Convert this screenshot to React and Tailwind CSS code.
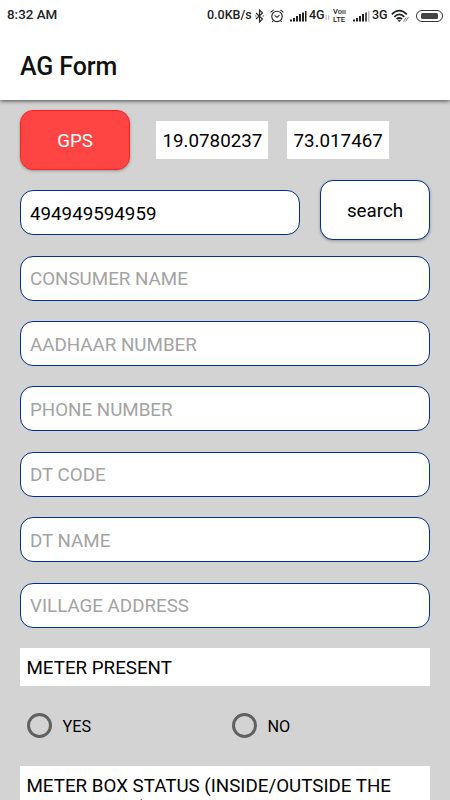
import React from "react"

const fields = [
	"CONSUMER NAME",
	"AADHAAR NUMBER",
	"PHONE NUMBER",
	"DT CODE",
	"DT NAME",
	"VILLAGE ADDRESS",
]

function Signal({ weak }) {
	return (
		<svg className="w-[17px] h-3 shrink-0" viewBox="0 0 17 12" fill="#222">
			<rect x="0" y="9.5" width="2" height="2" />
			<rect x="3" y="8" width="2" height="3.5" />
			<rect x="6" y="6" width="2" height="5.5" />
			<rect x="9" y="4" width="2" height="7.5" />
			<rect x="12" y="2.5" width="2" height="9" fill={weak ? "#555" : "#222"} />
			<rect x="15" y="1" width="1.5" height="10.5" fill={weak ? "#bbb" : "#222"} />
		</svg>
	)
}

function StatusBar() {
	return (
		<div className="flex h-[31px] items-center pl-[7px] pr-[7px] text-[12.5px] font-medium text-[#222]">
			<span className="w-[200px] text-[13.4px]">8:32 AM</span>
			<span className="w-[46px] whitespace-nowrap">0.0KB/s</span>
			{/* Bluetooth */}
			<svg className="ml-[2px] w-[9px] h-3.5 shrink-0" viewBox="0 0 9 14" fill="none" stroke="#222" strokeWidth="1.1">
				<path d="M1 4 L7.5 10 L4.5 13 V1 L7.5 4 L1 10" />
				<path d="M0.2 7h1.2M7.6 7h1.2" />
			</svg>
			{/* Alarm */}
			<svg className="ml-[6px] w-3.5 h-3.5 shrink-0" viewBox="0 0 14 14" fill="none" stroke="#222" strokeWidth="1.1">
				<circle cx="7" cy="7.4" r="5.2" />
				<path d="M0.6 3.4 L3.6 0.9 M13.4 3.4 L10.4 0.9 M4.6 6.3 L7 8.3 L9.5 6.2 M3.2 11.8l-1 1.2M10.8 11.8l1 1.2" />
			</svg>
			<span className="ml-[6px] flex"><Signal /></span>
			<span className="ml-[2px] w-[15px]">4G</span>
			<svg className="ml-px mt-1 w-[5px] h-[5px] shrink-0" viewBox="0 0 5 5" stroke="#aaa" strokeWidth="0.8" fill="none">
				<path d="M1.2 0v4.5l-1-1M3.6 5V.5l1 1" />
			</svg>
			<span className="ml-[3px] flex w-[14px] flex-col text-[7.5px] font-medium leading-[8px]">
				<span className="whitespace-nowrap">Voıı</span>
				<span>LTE</span>
			</span>
			<span className="ml-[6px] flex"><Signal weak /></span>
			<span className="ml-[2px] w-[15px]">3G</span>
			{/* Wifi */}
			<svg className="ml-[4px] w-[19px] h-3.5 shrink-0" viewBox="0 0 19 14" fill="none" stroke="#222" strokeWidth="1.7">
				<path d="M0.8 5.3 Q8.3 -2 15.8 5.3M3.3 7.8 Q8.3 3 13.3 7.8M5.6 10.2 Q8.3 7.8 11 10.2" />
				<path d="M6.9 11.2h2.8l-1.4 1.8z" fill="#222" strokeWidth="0.4" />
				<path d="M12.5 12.5 L15 8.5M14.5 12.5 L17.4 8.3" stroke="#777" strokeWidth="1" />
			</svg>
			{/* Battery */}
			<span className="ml-[6px] flex h-[12px] w-[27px] shrink-0 rounded-full border border-[#333] p-[2px]">
				<span className="mx-[2px] flex-1 rounded-[1.5px] bg-[#444]"></span>
			</span>
		</div>
	)
}

function Radio({ label }) {
	return (
		<label className="flex w-[205px] shrink-0 items-center">
			<span className="h-[25px] w-[25px] rounded-full border-3 border-[#606060]"></span>
			<span className="ml-[10.5px] pt-[2px] text-[16.25px] text-black">{label}</span>
		</label>
	)
}

function App() {
	return (
		<div
			className="flex h-[800px] w-[450px] flex-col overflow-hidden bg-[#d3d3d3]
				font-['Roboto',sans-serif] text-[18.75px] text-black"
		>
			{/* Header */}
			<header className="relative h-[100px] shrink-0 bg-white shadow-[0_1px_4px_rgba(0,0,0,0.65)]">
				<StatusBar />
				<h1 className="ml-5 flex h-[71px] items-center text-[25px] font-medium tracking-[-0.1px] text-[#111]">AG Form</h1>
			</header>

			<main className="flex flex-col px-5 pt-[10px]">
				{/* Location */}
				<div className="flex items-center">
					<button
						className="h-[60px] w-[110px] rounded-[13px] border border-[#ff2222] bg-[#ff4444] pt-[2px]
							text-white shadow-[0_1px_3px_rgba(0,0,0,0.3)]"
					>
						GPS
					</button>
					<span className="ml-[26px] flex h-[38px] w-[112px] items-center bg-white pl-[6.5px] pt-[2px]">19.0780237</span>
					<span className="ml-[19px] flex h-[38px] w-[102px] items-center bg-white pl-[6.5px] pt-[2px]">73.017467</span>
				</div>

				{/* Search */}
				<div className="mt-[10px] flex">
					<input
						defaultValue="494949594959"
						className="mt-[10px] h-[45px] w-[280px] rounded-[13px] border border-[#003087] bg-white px-[9px] pt-[2px]"
					/>
					<button
						className="ml-5 h-[60px] w-[110px] rounded-[13px] border border-[#003087] bg-white pt-[2px]
							shadow-[0_1px_3px_rgba(0,0,0,0.3)]"
					>
						search
					</button>
				</div>

				{/* Consumer details */}
				<div className="mt-[15.7px] flex flex-col gap-[20.4px]">
					{fields.map((name) => (
						<input
							key={name}
							placeholder={name}
							className="h-[45px] w-full rounded-[13px] border border-[#003087] bg-white px-[9px] pt-[2px]
								placeholder:text-[#a3a3a3]"
						/>
					))}
				</div>

				<div className="mt-[20.3px] flex h-[38px] items-center bg-white px-[6.5px] pt-[2px]">METER PRESENT</div>

				<div className="mt-[20px] flex h-10 items-center pl-[7px]">
					<Radio label="YES" />
					<Radio label="NO" />
				</div>

				<div className="mt-[20px] bg-white px-[6.5px] pt-[9px] leading-[22.5px]">
					METER BOX STATUS (INSIDE/OUTSIDE THE FARM HOUSE)
				</div>
			</main>
		</div>
	)
}

export default App;
